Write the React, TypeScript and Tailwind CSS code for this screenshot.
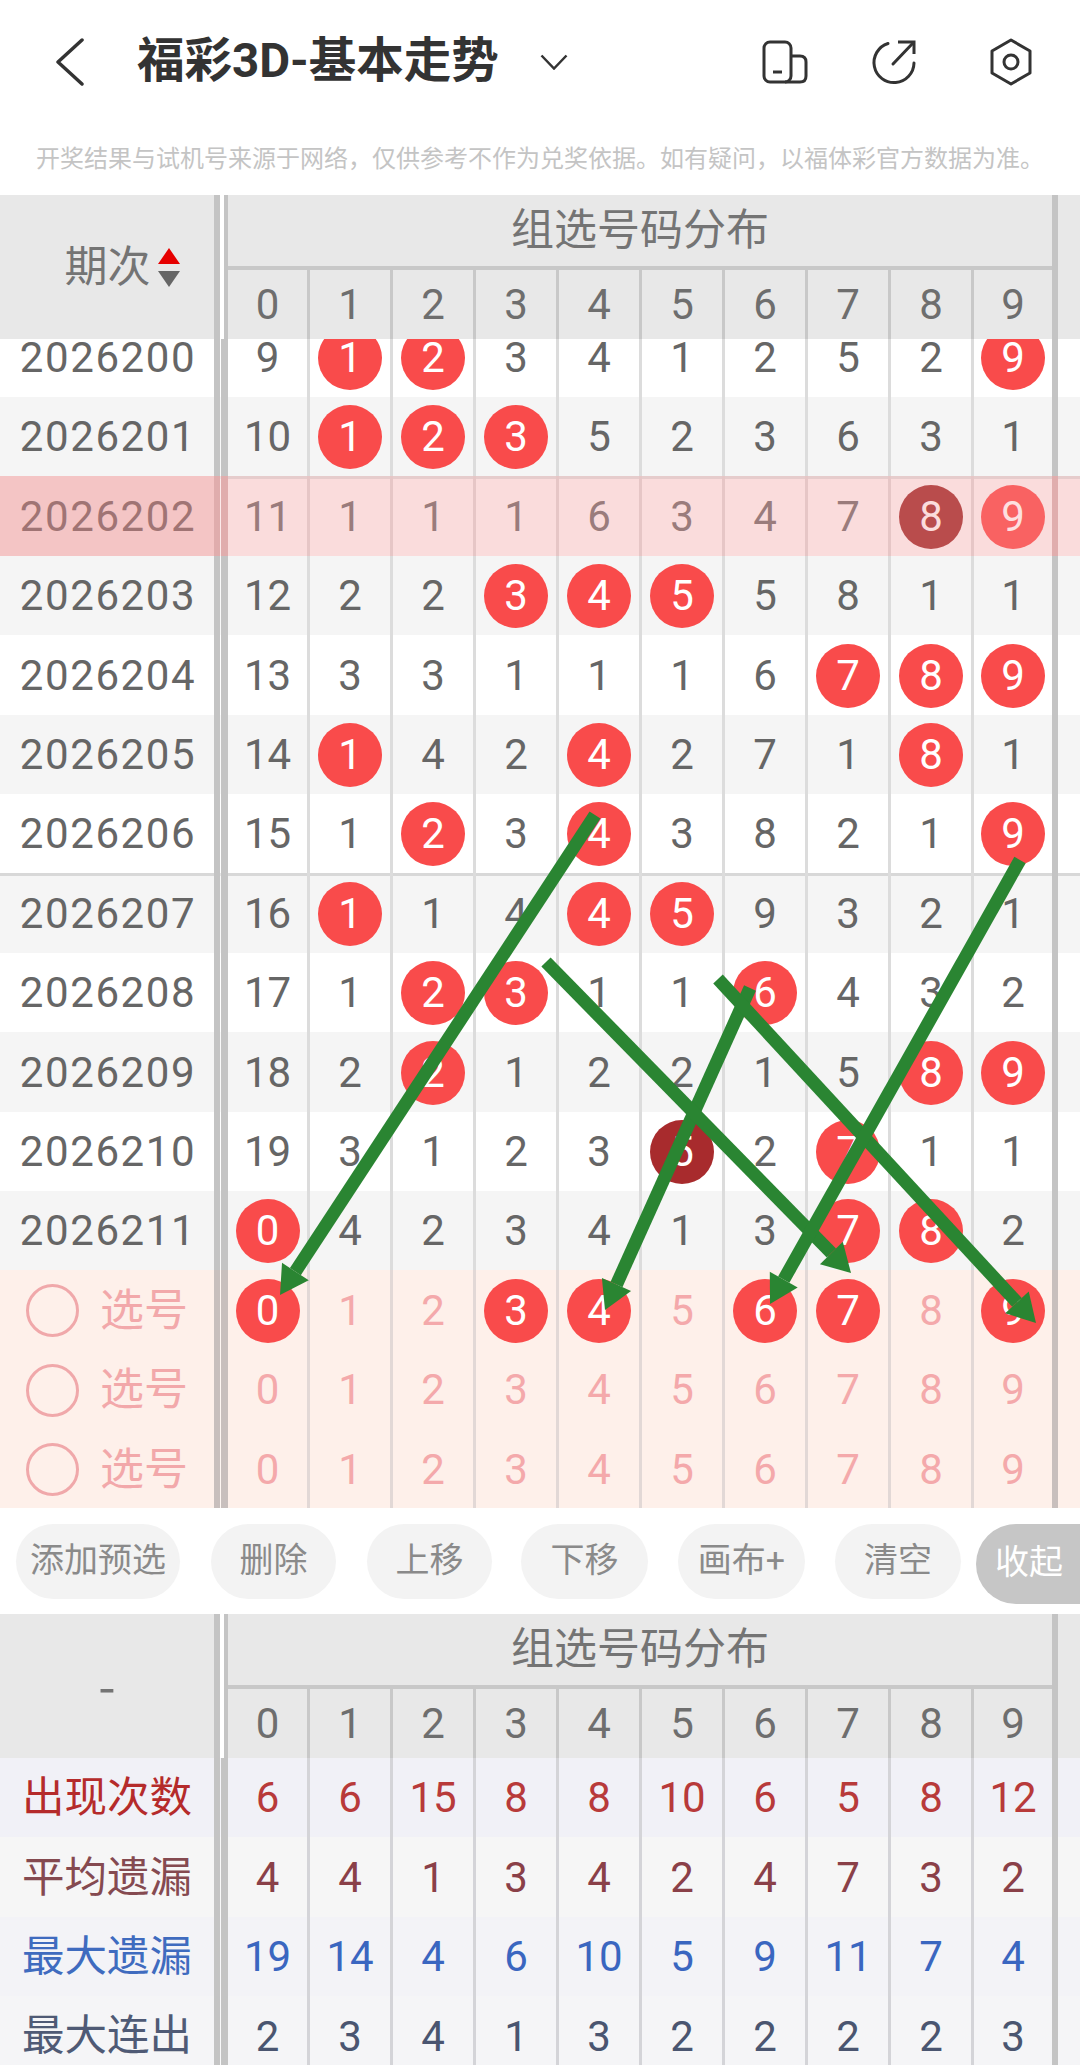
import React from 'react'

// cell kinds: plain number, ball, dark ball (missed), light ball on the highlighted row
type Num = number | string
type CellValue = Num | { readonly v: Num; readonly k: 'b' | 'd' | 'h' | 'l' }

const b = (v: Num): CellValue => ({ v, k: 'b' })
const d = (v: Num): CellValue => ({ v, k: 'd' })
const h = (v: Num): CellValue => ({ v, k: 'h' })
const l = (v: Num): CellValue => ({ v, k: 'l' })

const digits = [0, 1, 2, 3, 4, 5, 6, 7, 8, 9]

const rows: ReadonlyArray<{ readonly issue: string; readonly cells: ReadonlyArray<CellValue> }> = [
  { issue: '2026200', cells: [9, b(1), b(2), 3, 4, 1, 2, 5, 2, b(9)] },
  { issue: '2026201', cells: [10, b(1), b(2), b(3), 5, 2, 3, 6, 3, 1] },
  { issue: '2026202', cells: [11, 1, 1, 1, 6, 3, 4, 7, h(8), l(9)] },
  { issue: '2026203', cells: [12, 2, 2, b(3), b(4), b(5), 5, 8, 1, 1] },
  { issue: '2026204', cells: [13, 3, 3, 1, 1, 1, 6, b(7), b(8), b(9)] },
  { issue: '2026205', cells: [14, b(1), 4, 2, b(4), 2, 7, 1, b(8), 1] },
  { issue: '2026206', cells: [15, 1, b(2), 3, b(4), 3, 8, 2, 1, b(9)] },
  { issue: '2026207', cells: [16, b(1), 1, 4, b(4), b(5), 9, 3, 2, 1] },
  { issue: '2026208', cells: [17, 1, b(2), b(3), 1, 1, b(6), 4, 3, 2] },
  { issue: '2026209', cells: [18, 2, b(2), 1, 2, 2, 1, 5, b(8), b(9)] },
  { issue: '2026210', cells: [19, 3, 1, 2, 3, d(5), 2, b(7), 1, 1] },
  { issue: '2026211', cells: [b(0), 4, 2, 3, 4, 1, 3, b(7), b(8), 2] },
]

const picks: ReadonlyArray<ReadonlyArray<CellValue>> = [
  [b(0), 1, 2, b(3), b(4), 5, b(6), b(7), 8, b(9)],
  digits,
  digits,
]

const stats = [
  {
    label: '出现次数',
    labelClass: 'text-[#b52b2b]',
    numClass: 'text-[#b83a3a] pt-[1.5px]',
    bg: 'bg-[#f1f1f7]',
    values: [6, 6, 15, 8, 8, 10, 6, 5, 8, 12],
  },
  {
    label: '平均遗漏',
    labelClass: 'text-[#854a50]',
    numClass: 'text-[#8a4048] pt-[1.5px]',
    bg: 'bg-[#f6f6f6]',
    values: [4, 4, 1, 3, 4, 2, 4, 7, 3, 2],
  },
  {
    label: '最大遗漏',
    labelClass: 'text-[#3f6bbf]',
    numClass: 'text-[#3a66c0] pt-[1.5px]',
    bg: 'bg-[#f3f3f7]',
    values: [19, 14, 4, 6, 10, 5, 9, 11, 7, 4],
  },
  {
    label: '最大连出',
    labelClass: 'text-[#4f5a75]',
    numClass: 'text-[#4a5570] pt-[1.5px]',
    bg: 'bg-[#f5f5f7]',
    values: [2, 3, 4, 1, 3, 2, 2, 2, 2, 3],
  },
]

const buttons = [
  { text: '添加预选', className: 'w-[164px] ml-[16px]' },
  { text: '删除', className: 'w-[125px] ml-[31px]' },
  { text: '上移', className: 'w-[125px] ml-[31px]' },
  { text: '下移', className: 'w-[127px] ml-[29px]' },
  { text: '画布+', className: 'w-[127px] ml-[30px]' },
  { text: '清空', className: 'w-[126px] ml-[30px]' },
]

const cellWidth = (i: number): string => {
  if (i === 0) return 'w-[82px] border-r-[3px]'
  if (i === 9) return 'w-[78px]'
  return 'w-[83px] border-r-[3px]'
}

const Ball = ({ v, k }: { readonly v: Num; readonly k: 'b' | 'd' | 'h' | 'l' }): JSX.Element => {
  const color =
    k === 'b'
      ? 'bg-[#f94b4b] text-white'
      : k === 'd'
        ? 'bg-[#a82b2d] text-white'
        : k === 'h'
          ? 'bg-[#b94c4c] text-[#fbdcdc]'
          : 'bg-[#f96262] text-[#fde0e0]'
  return (
    <span className={`flex h-16 w-16 shrink-0 items-center justify-center rounded-full ${color}`}>
      {v}
    </span>
  )
}

const Cells = ({
  cells,
  lineClass,
  textClass,
}: {
  readonly cells: ReadonlyArray<CellValue>
  readonly lineClass: string
  readonly textClass: string
}): JSX.Element => (
  <div className="flex h-full">
    {cells.map((c, i) => (
      <div
        key={i}
        className={`flex h-full items-center justify-center ${cellWidth(i)} ${lineClass} ${textClass}`}
      >
        {typeof c === 'object' ? <Ball v={c.v} k={c.k} /> : c}
      </div>
    ))}
  </div>
)

type RowShellProps = {
  readonly left: React.ReactNode
  readonly cells: ReadonlyArray<CellValue>
  readonly rowClass: string
  readonly leftClass?: string
  readonly barClass?: string
  readonly lineClass?: string
  readonly textClass?: string
}

const RowShell = ({
  left,
  cells,
  rowClass,
  leftClass = '',
  barClass = 'bg-[#c4c4c4]',
  lineClass = 'border-[#dcdcdc]',
  textClass = 'text-[#666] pt-[1.5px]',
}: RowShellProps): JSX.Element => (
  <div className={`flex h-[79.4px] text-[42px] leading-none ${rowClass}`}>
    <div className={`flex h-full w-[214px] items-center justify-center pt-[1.5px] ${leftClass}`}>{left}</div>
    <div className={`h-full w-[6px] ${barClass}`} />
    <div className="h-full w-[1px] bg-white/40" />
    <div className={`h-full w-[7px] ${barClass}`} />
    <Cells cells={cells} lineClass={lineClass} textClass={textClass} />
    <div className={`h-full w-[6px] ${barClass}`} />
  </div>
)

const TableHeader = ({ left }: { readonly left: React.ReactNode }): JSX.Element => (
  <div className="flex h-[144px] bg-[#e8e8e8] text-[#747474]">
    <div className="flex h-full w-[214px] items-center justify-center">{left}</div>
    <div className="h-full w-[6px] bg-[#c4c4c4]" />
    <div className="h-full w-[4px] bg-white" />
    <div className="h-full w-[4px] bg-[#c4c4c4]" />
    <div className="flex h-full w-[824px] flex-col">
      <div className="flex h-[71px] items-center justify-center text-[43px] leading-none">
        组选号码分布
      </div>
      <div className="h-[4px] bg-[#c8c8c8]" />
      <div className="h-[69px] text-[42px] leading-none">
        <Cells cells={digits} lineClass="border-[#c8c8c8]" textClass="text-[#6e6e6e]" />
      </div>
    </div>
    <div className="h-full w-[6px] bg-[#c4c4c4]" />
  </div>
)

const Arrow = ({
  x1,
  y1,
  x2,
  y2,
}: {
  readonly x1: number
  readonly y1: number
  readonly x2: number
  readonly y2: number
}): JSX.Element => {
  const len = Math.hypot(x2 - x1, y2 - y1)
  const ux = (x2 - x1) / len
  const uy = (y2 - y1) / len
  const baseX = x2 - ux * 28
  const baseY = y2 - uy * 28
  const px = -uy * 16
  const py = ux * 16
  return (
    <g fill="#2a8532" stroke="#2a8532">
      <line x1={x1} y1={y1} x2={baseX} y2={baseY} strokeWidth={13} />
      <polygon
        stroke="none"
        points={`${x2},${y2} ${baseX + px},${baseY + py} ${baseX - px},${baseY - py}`}
      />
    </g>
  )
}

export default function App(): JSX.Element {
  return (
    <div className="relative h-[2065px] w-[1080px] overflow-hidden bg-white [font-family:Roboto,'Noto_Sans_CJK_SC',sans-serif]">
      {/* top bar */}
      <div className="flex h-[124px] items-center">
        <svg width="29" height="48" viewBox="0 0 29 48" className="ml-[55px]" fill="none">
          <path d="M27 2 L3 24 L27 46" stroke="#333" strokeWidth="3.5" strokeLinecap="round" strokeLinejoin="round" />
        </svg>
        <span className="ml-[53px] text-[47.5px] font-bold leading-none text-[#333]">福彩3D-基本走势</span>
        <svg width="28" height="16" viewBox="0 0 28 16" className="ml-[41px]" fill="none">
          <path d="M1.5 1.5 L14 14.5 L26.5 1.5" stroke="#333" strokeWidth="2.5" />
        </svg>
        <svg width="46" height="44" viewBox="0 0 46 44" className="ml-[194px]" fill="none" stroke="#333" strokeWidth="3">
          <rect x="2" y="2" width="27" height="40" rx="6" />
          <path d="M29 16 H38 Q44 16 44 22 V36 Q44 42 38 42 H23" />
          <path d="M11 32 H20" />
        </svg>
        <svg width="46" height="46" viewBox="0 0 46 46" className="ml-[63px]" fill="none" stroke="#333" strokeWidth="3" strokeLinecap="round">
          <path d="M17 4.5 A20 20 0 1 0 43 24" />
          <path d="M27 3 H43 V15" strokeLinecap="butt" />
          <path d="M42 4 L22 25" />
        </svg>
        <svg width="44" height="48" viewBox="0 0 44 48" className="ml-[72px]" fill="none" stroke="#333" strokeWidth="3">
          <path d="M22 2 L41 13 V35 L22 46 L3 35 V13 Z" strokeLinejoin="round" />
          <circle cx="22" cy="24" r="7" />
        </svg>
      </div>
      <div className="flex h-[71px] items-center justify-center pb-[1px] text-[24px] leading-none text-[#c4c4c4]">
        开奖结果与试机号来源于网络，仅供参考不作为兑奖依据。如有疑问，以福体彩官方数据为准。
      </div>

      {/* trend table */}
      <TableHeader
        left={
          <div className="flex items-center pl-[30px] text-[43px] leading-none">
            <span>期次</span>
            <span className="ml-[7px] flex flex-col items-center">
              <span className="h-0 w-0 border-x-[11px] border-b-[16px] border-x-transparent border-b-[#e60000]" />
              <span className="mt-[7px] h-0 w-0 border-x-[11px] border-t-[16px] border-x-transparent border-t-[#666]" />
            </span>
          </div>
        }
      />
      <div className="h-[1170px] overflow-hidden">
        <div className="mt-[-21.4px]">
          {rows.map((r, i) => {
            const rowBg = i % 2 === 1 || i === 3 ? 'bg-[#f5f5f5]' : 'bg-white'
            if (i === 2) {
              return (
                <RowShell
                  key={r.issue}
                  left={<span className="pl-[2px] tracking-[1.6px]">{r.issue}</span>}
                  cells={r.cells}
                  rowClass="bg-[#fadcdc] shadow-[inset_0_3px_0_#e6cccc]"
                  leftClass="bg-[#f4c5c5] text-[#a07474]"
                  barClass="bg-[#e0adad]"
                  lineClass="border-[#e6c6c6]"
                  textClass="text-[#9a7c7c] pt-[1.5px]"
                />
              )
            }
            return (
              <RowShell
                key={r.issue}
                left={<span className="pl-[2px] tracking-[1.6px] text-[#666]">{r.issue}</span>}
                cells={r.cells}
                rowClass={`${rowBg} ${i === 7 ? 'shadow-[inset_0_3px_0_#d8d8d8]' : ''}`}
              />
            )
          })}
          {picks.map((cells, i) => (
            <RowShell
              key={i}
              left={
                <span className="flex items-center text-[44px] text-[#f2a8aa]">
                  <span className="h-[53px] w-[53px] rounded-full border-[3px] border-[#f0a8aa]" />
                  <span className="ml-[21px]">选号</span>
                </span>
              }
              cells={cells}
              rowClass="bg-[#fef0ea]"
              barClass="bg-[#c8bfbd]"
              lineClass="border-[#e2d8d6]"
              textClass="text-[#f4a9ab] pt-[1.5px]"
            />
          ))}
        </div>
      </div>

      {/* toolbar */}
      <div className="flex h-[105px] items-start pt-[15px] text-[34px] leading-none">
        {buttons.map((btn) => (
          <div
            key={btn.text}
            className={`flex h-[75px] shrink-0 items-center justify-center rounded-full bg-[#f3f3f3] pb-[4px] text-[#8a8a8a] ${btn.className}`}
          >
            {btn.text}
          </div>
        ))}
        <div className="ml-[15px] flex h-[80px] w-[104px] shrink-0 items-center rounded-l-full bg-[#c6c6c6] pb-[4px] pl-[19px] text-white">
          收起
        </div>
      </div>

      {/* stats table */}
      <TableHeader left={<span className="pb-[6px] text-[50px] leading-none [font-family:'Noto_Sans_CJK_SC',sans-serif]">-</span>} />
      {stats.map((s) => (
        <RowShell
          key={s.label}
          left={<span className={`text-[42.5px] ${s.labelClass}`}>{s.label}</span>}
          cells={s.values}
          rowClass={s.bg}
          lineClass="border-[#d4d4d8]"
          textClass={s.numClass}
        />
      ))}

      <svg className="pointer-events-none absolute inset-0" width="1080" height="2065" viewBox="0 0 1080 2065">
        <Arrow x1={595} y1={815} x2={280} y2={1295} />
        <Arrow x1={750} y1={988} x2={605} y2={1310} />
        <Arrow x1={546} y1={962} x2={851} y2={1273} />
        <Arrow x1={718} y1={979} x2={1036} y2={1323} />
        <Arrow x1={1020} y1={860} x2={770} y2={1304} />
      </svg>
    </div>
  )
}
